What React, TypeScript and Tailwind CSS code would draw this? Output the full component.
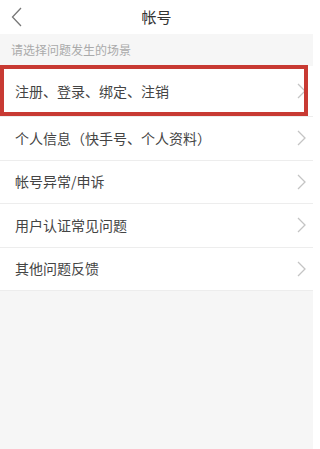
import React from "react";

const rows = [
  "注册、登录、绑定、注销",
  "个人信息（快手号、个人资料）",
  "帐号异常/申诉",
  "用户认证常见问题",
  "其他问题反馈",
];

function Chevron() {
  return (
    <svg width="9" height="16" viewBox="0 0 9 16" fill="none">
      <path d="M1 1l7 7-7 7" stroke="#c4c4c4" strokeWidth="1.3" />
    </svg>
  );
}

export default function App() {
  return (
    <div
      className="w-[320px] h-[449px] bg-white flex overflow-hidden"
      style={{ fontFamily: '"Noto Sans CJK SC", "Noto Sans", sans-serif' }}
    >
      <div className="relative w-[313px] h-full bg-[#f6f6f6] flex flex-col">
        <div className="h-[34px] bg-white flex items-center relative shrink-0">
          <div className="pl-[11px] flex items-center">
            <svg width="12" height="20" viewBox="0 0 12 20" fill="none">
              <path d="M10 1L1.5 10 10 19" stroke="#777" strokeWidth="1.3" />
            </svg>
          </div>
          <div className="absolute inset-0 flex items-center justify-center text-[15px] text-[#333]">
            帐号
          </div>
        </div>
        <div className="h-[32px] flex items-center pl-[11px] text-[12px] text-[#aaa] shrink-0">
          请选择问题发生的场景
        </div>
        <div className="bg-white flex flex-col">
          {rows.map((r, i) => (
            <div
              key={r}
              className={`flex items-center justify-between pl-[15px] pr-[7px] ${
                i === 0 ? "h-[50px]" : "h-[43.5px] border-t border-[#ededed]"
              }`}
            >
              <span className="text-[14px] text-[#444]">{r}</span>
              <Chevron />
            </div>
          ))}
        </div>
        <div className="border-t border-[#ededed]" />
        <div className="absolute left-0 top-[65px] w-[308px] h-[51px] border-[4.5px] border-[#c83a33]" />
      </div>
    </div>
  );
}
